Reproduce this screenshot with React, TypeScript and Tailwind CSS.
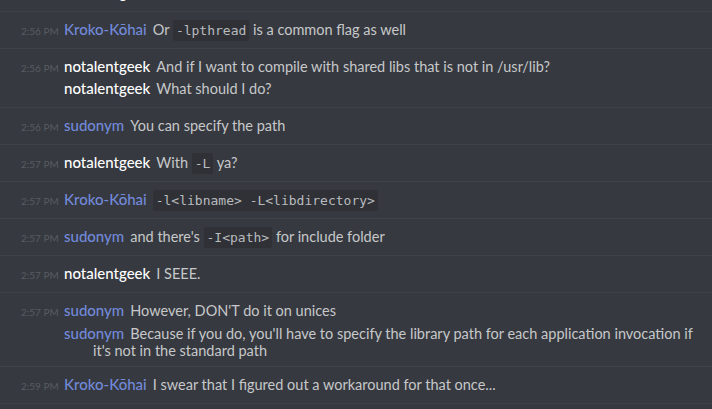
import React from "react";

type Part = string | { code: string };
type Msg = { name: string; color: "blue" | "white"; parts: Part[]; wrap?: boolean };
type Group = { time: string; msgs: Msg[]; cls?: string };

const groups: Group[] = [
  { time: "2:56 PM", cls: "mt-[-25px]", msgs: [{ name: "notalentgeek", color: "white", parts: ["thanks"] }] },
  { time: "2:56 PM", msgs: [{ name: "Kroko-Kōhai", color: "blue", parts: ["Or ", { code: "-lpthread" }, " is a common flag as well"] }] },
  {
    time: "2:56 PM",
    msgs: [
      { name: "notalentgeek", color: "white", parts: ["And if I want to compile with shared libs that is not in /usr/lib?"] },
      { name: "notalentgeek", color: "white", parts: ["What should I do?"] },
    ],
  },
  { time: "2:56 PM", msgs: [{ name: "sudonym", color: "blue", parts: ["You can specify the path"] }] },
  { time: "2:57 PM", msgs: [{ name: "notalentgeek", color: "white", parts: ["With ", { code: "-L" }, " ya?"] }] },
  { time: "2:57 PM", msgs: [{ name: "Kroko-Kōhai", color: "blue", parts: [{ code: "-l<libname> -L<libdirectory>" }] }] },
  { time: "2:57 PM", msgs: [{ name: "sudonym", color: "blue", parts: ["and there's ", { code: "-I<path>" }, " for include folder"] }] },
  { time: "2:57 PM", msgs: [{ name: "notalentgeek", color: "white", parts: ["I SEEE."] }] },
  {
    time: "2:57 PM",
    msgs: [
      { name: "sudonym", color: "blue", parts: ["However, DON'T do it on unices"] },
      {
        name: "sudonym",
        color: "blue",
        wrap: true,
        parts: [
          "Because if you do, you'll have to specify the library path for each application invocation if it's not in the standard path",
        ],
      },
    ],
  },
  { time: "2:59 PM", msgs: [{ name: "Kroko-Kōhai", color: "blue", parts: ["I swear that I figured out a workaround for that once..."] }] },
];

function Message({ m, time }: { m: Msg; time?: string }) {
  return (
    <div className={`flex items-start ${m.wrap ? "pt-[3px]" : ""}`}>
      <div className="w-[64px] shrink-0 pl-[21px] pt-[1px] text-[10px] text-[#585c63] leading-[22px] h-[22px] whitespace-nowrap">
        {time ?? ""}
      </div>
      <div
        className={`min-w-0 flex-1 pl-[29px] -indent-[29px] pr-[10px] text-[14.5px] text-[#c6c8ca] ${
          m.wrap ? "leading-[17px]" : "leading-[22px] h-[22px]"
        }`}
      >
        <span
          className={`font-medium mr-[6px] text-[15px] leading-none ${m.color === "blue" ? "text-[#7289da]" : "text-white"}`}
        >
          {m.name}
        </span>
        {m.parts.map((p, i) =>
          typeof p === "string" ? (
            <span key={i}>{p}</span>
          ) : (
            <code
              key={i}
              className="bg-[#2f3136] text-[#b9bbbe] rounded-[3px] px-[3px] py-[3px] text-[13px] leading-none font-['DejaVu_Sans_Mono',monospace]"
            >
              {p.code}
            </code>
          )
        )}
      </div>
    </div>
  );
}

export default function App() {
  return (
    <div className="w-[712px] h-[409px] overflow-hidden bg-[#36393f] font-['Lato',sans-serif]">
      {groups.map((g, gi) => (
        <div key={gi} className={`border-b border-[#3f4248] py-[7px] ${g.cls ?? ""}`}>
          {g.msgs.map((m, mi) => (
            <Message key={mi} m={m} time={mi === 0 ? g.time : undefined} />
          ))}
        </div>
      ))}
    </div>
  );
}
